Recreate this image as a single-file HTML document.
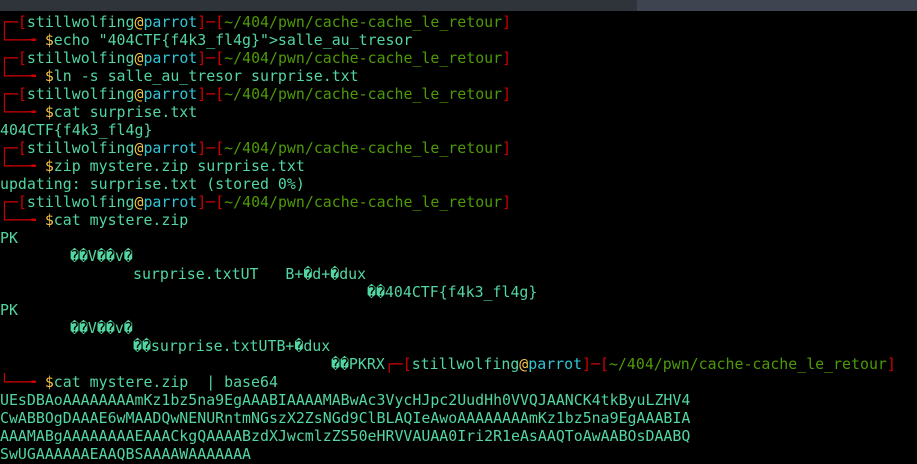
<!DOCTYPE html>
<html><head><meta charset="utf-8"><style>
html,body{margin:0;padding:0;background:#000;width:917px;height:464px;overflow:hidden}
.tb{position:absolute;left:0;top:0;width:917px;height:11px;background:#2f343b}
.tb2{position:absolute;left:637px;top:0;width:280px;height:11px;background:#3e4450}
.w{position:absolute;left:0;top:1px;width:917px;height:463px}
.l{position:absolute;left:0;white-space:pre;font-family:"DejaVu Sans Mono","Liberation Mono",monospace;font-size:14.9px;line-height:18px;color:#52d6a2}
.r{color:#d00000}.g{color:#4e9a06}.y{color:#f5c242}.c{color:#2fc6d6}
</style></head><body>
<div class="tb"></div><div class="tb2"></div>
<div class="w">
<div class="l" style="top:12px"><span class="r">┌─[</span>stillwolfing<span class="y">@</span><span class="c">parrot</span><span class="r">]─[</span><span class="g">~/404/pwn/cache-cache_le_retour</span><span class="r">]</span></div>
<div class="l" style="top:30px"><span class="r">└──╼ </span><span class="y">$</span>echo "404CTF{f4k3_fl4g}"&gt;salle_au_tresor</div>
<div class="l" style="top:48px"><span class="r">┌─[</span>stillwolfing<span class="y">@</span><span class="c">parrot</span><span class="r">]─[</span><span class="g">~/404/pwn/cache-cache_le_retour</span><span class="r">]</span></div>
<div class="l" style="top:66px"><span class="r">└──╼ </span><span class="y">$</span>ln -s salle_au_tresor surprise.txt</div>
<div class="l" style="top:84px"><span class="r">┌─[</span>stillwolfing<span class="y">@</span><span class="c">parrot</span><span class="r">]─[</span><span class="g">~/404/pwn/cache-cache_le_retour</span><span class="r">]</span></div>
<div class="l" style="top:102px"><span class="r">└──╼ </span><span class="y">$</span>cat surprise.txt</div>
<div class="l" style="top:120px">404CTF{f4k3_fl4g}</div>
<div class="l" style="top:138px"><span class="r">┌─[</span>stillwolfing<span class="y">@</span><span class="c">parrot</span><span class="r">]─[</span><span class="g">~/404/pwn/cache-cache_le_retour</span><span class="r">]</span></div>
<div class="l" style="top:156px"><span class="r">└──╼ </span><span class="y">$</span>zip mystere.zip surprise.txt</div>
<div class="l" style="top:174px">updating: surprise.txt (stored 0%)</div>
<div class="l" style="top:192px"><span class="r">┌─[</span>stillwolfing<span class="y">@</span><span class="c">parrot</span><span class="r">]─[</span><span class="g">~/404/pwn/cache-cache_le_retour</span><span class="r">]</span></div>
<div class="l" style="top:210px"><span class="r">└──╼ </span><span class="y">$</span>cat mystere.zip</div>
<div class="l" style="top:228px">PK</div>
<div class="l" style="top:246px;left:70px">��V��v�</div>
<div class="l" style="top:264px;left:133px">surprise.txtUT   B+�d+�dux</div>
<div class="l" style="top:282px;left:367px">��404CTF{f4k3_fl4g}</div>
<div class="l" style="top:300px">PK</div>
<div class="l" style="top:318px;left:70px">��V��v�</div>
<div class="l" style="top:336px;left:133px">��surprise.txtUTB+�dux</div>
<div class="l" style="top:354px;left:331px">��PKRX<span class="r">┌─[</span>stillwolfing<span class="y">@</span><span class="c">parrot</span><span class="r">]─[</span><span class="g">~/404/pwn/cache-cache_le_retour</span><span class="r">]</span></div>
<div class="l" style="top:372px"><span class="r">└──╼ </span><span class="y">$</span>cat mystere.zip  | base64</div>
<div class="l" style="top:390px">UEsDBAoAAAAAAAAmKz1bz5na9EgAAABIAAAAMABwAc3VycHJpc2UudHh0VVQJAANCK4tkByuLZHV4</div>
<div class="l" style="top:408px">CwABBOgDAAAE6wMAADQwNENURntmNGszX2ZsNGd9ClBLAQIeAwoAAAAAAAAmKz1bz5na9EgAAABIA</div>
<div class="l" style="top:426px">AAAMABgAAAAAAAAEAAACkgQAAAABzdXJwcmlzZS50eHRVVAUAA0Iri2R1eAsAAQToAwAABOsDAABQ</div>
<div class="l" style="top:444px">SwUGAAAAAAEAAQBSAAAAWAAAAAAA</div>
</div>
</body></html>
